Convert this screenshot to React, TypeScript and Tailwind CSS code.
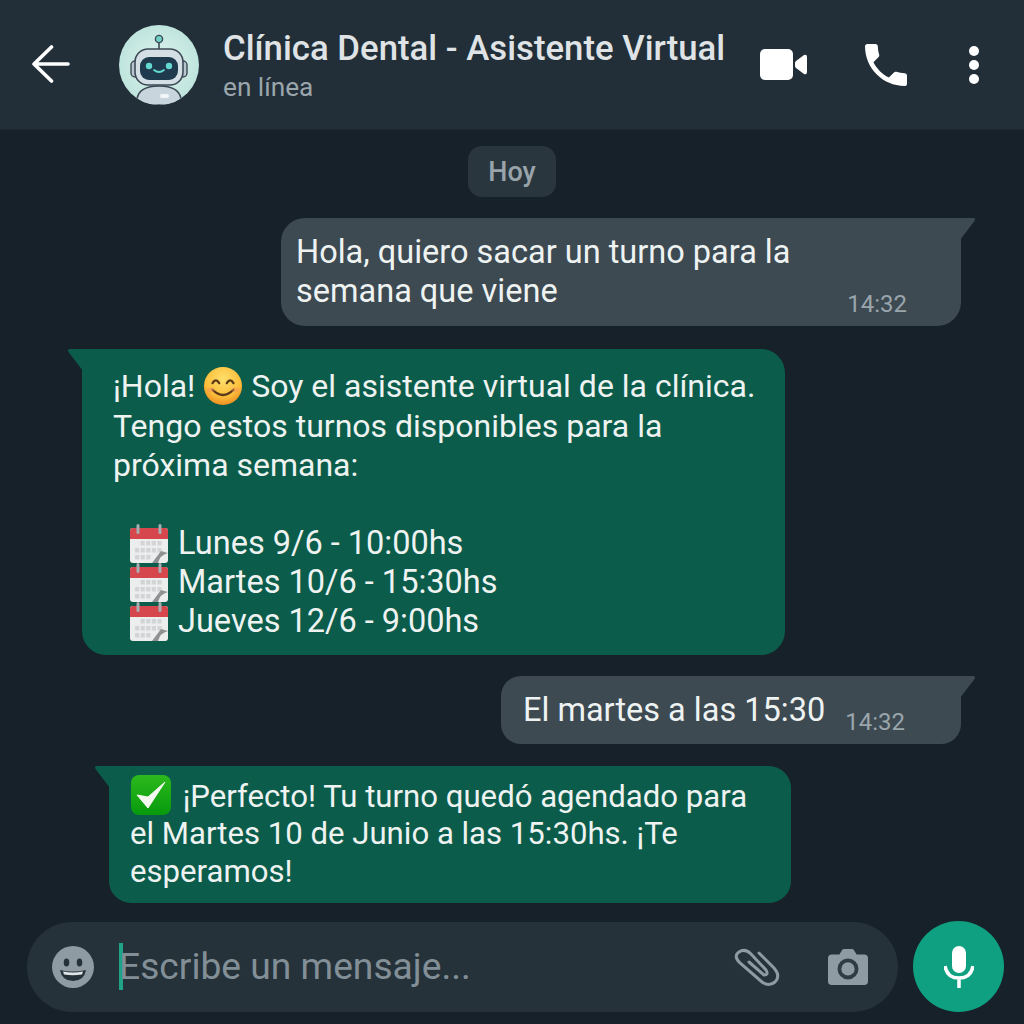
import React from "react";

function Smile() {
  return (
    <svg width="40" height="40" viewBox="0 0 42 42" className="inline-block align-[-9px]">
      <defs>
        <radialGradient id="sm" cx="50%" cy="32%" r="70%">
          <stop offset="0%" stopColor="#ffdf6a" />
          <stop offset="65%" stopColor="#fbbf3c" />
          <stop offset="100%" stopColor="#ee8a1f" />
        </radialGradient>
      </defs>
      <circle cx="21" cy="21" r="20" fill="url(#sm)" />
      <path d="M10 18q3.500-6 7 0M25 18q3.500-6 7 0" fill="none" stroke="#5b3a1a" strokeWidth="2.400" strokeLinecap="round" />
      <path d="M10 25q11 11 22 0" fill="none" stroke="#5b3a1a" strokeWidth="2.400" strokeLinecap="round" />
      <ellipse cx="8" cy="25" rx="4" ry="2.500" fill="#f58f5c" opacity=".45" />
      <ellipse cx="34" cy="25" rx="4" ry="2.500" fill="#f58f5c" opacity=".45" />
    </svg>
  );
}

function Cal() {
  const cells = [];
  for (let r = 0; r < 3; r++)
    for (let c = 0; c < 5; c++)
      if (!(r === 0 && c === 0) && !(r === 2 && c > 2))
        cells.push(<rect key={r + "-" + c} x={5 + c * 5.6} y={17 + r * 7} width="4.200" height="4.600" rx=".5" fill="#d2d4d6" />);
  return (
    <svg width="38" height="39" viewBox="0 0 38 39" className="shrink-0">
      <rect x="0" y="4" width="38" height="35" rx="3" fill="#eceeee" />
      <path d="M0 15V7q0-3 3-3h32q3 0 3 3v8z" fill="#d5474c" />
      {cells}
      <path d="M22 39L31 27l7 2q-8 2-10 10z" fill="#8f9193" />
      <rect x="6.500" y="0" width="3" height="10" rx="1.500" fill="#a8aeb2" />
      <rect x="28.500" y="0" width="3" height="10" rx="1.500" fill="#a8aeb2" />
    </svg>
  );
}

function Check() {
  return (
    <svg width="42" height="42" viewBox="0 0 42 42" className="inline-block align-[-9px] mr-[3px]">
      <defs>
        <linearGradient id="ck" x1="0" y1="0" x2="0" y2="1">
          <stop offset="0%" stopColor="#2cb91c" />
          <stop offset="100%" stopColor="#079a0d" />
        </linearGradient>
      </defs>
      <rect x="1" y="1" width="40" height="40" rx="8" fill="url(#ck)" />
      <path d="M7 21l11 13L35 8 18 23z" fill="#f4f8f0" stroke="#f4f8f0" strokeWidth="1" strokeLinejoin="round" />
    </svg>
  );
}

function Robot() {
  return (
    <svg width="80" height="80" viewBox="0 0 80 80" className="shrink-0">
      <defs>
        <clipPath id="rc"><circle cx="40" cy="40" r="40" /></clipPath>
        <radialGradient id="rb" cx="50%" cy="50%" r="60%">
          <stop offset="0%" stopColor="#e0f3ee" />
          <stop offset="100%" stopColor="#b8e2da" />
        </radialGradient>
      </defs>
      <g clipPath="url(#rc)">
        <rect width="80" height="80" fill="url(#rb)" />
        <path d="M18 80v-6q2-13 22-13t22 13v6z" fill="#c8d5dd" stroke="#3d4a56" strokeWidth="1.600" />
        <rect x="41" y="69" width="9" height="4" rx="2" fill="#f2f6f8" />
        <line x1="40" y1="16" x2="40" y2="24" stroke="#3d4a56" strokeWidth="1.600" />
        <circle cx="40" cy="14" r="3.600" fill="#6fd0c5" stroke="#3d4a56" strokeWidth="1.400" />
        <rect x="12" y="36" width="8" height="16" rx="4" fill="#b9c6cf" stroke="#3d4a56" strokeWidth="1.400" />
        <rect x="60" y="36" width="8" height="16" rx="4" fill="#b9c6cf" stroke="#3d4a56" strokeWidth="1.400" />
        <rect x="16" y="24" width="48" height="36" rx="13" fill="#d3dee5" stroke="#3d4a56" strokeWidth="1.600" />
        <rect x="21" y="32" width="38" height="23" rx="9" fill="#203a4d" />
        <circle cx="30" cy="41" r="3.200" fill="#63d8d0" />
        <circle cx="50" cy="41" r="3.200" fill="#63d8d0" />
        <path d="M35 45q5 4 10 0" fill="none" stroke="#63d8d0" strokeWidth="1.800" strokeLinecap="round" />
      </g>
    </svg>
  );
}

function Tail({ side, color }: { side: "left" | "right"; color: string }) {
  const d = side === "right" ? "M0 0H13Q16 0 14.500 3L0 22Z" : "M16 0H3Q0 0 1.500 3L16 22Z";
  return (
    <svg
      width="16"
      height="22"
      viewBox="0 0 16 22"
      className={side === "right" ? "absolute top-0 -right-[15px]" : "absolute top-0 -left-[15px]"}
    >
      <path d={d} fill={color} />
    </svg>
  );
}

const GRAY = "#3d4a52";
const GREEN = "#0b5c4a";

export default function App() {
  return (
    <div
      className="w-[1024px] h-[1024px] flex flex-col overflow-hidden bg-[#17212a] text-[#eef3f2]"
      style={{ fontFamily: "Roboto, 'Liberation Sans', sans-serif" }}
    >
      <header className="h-[130px] shrink-0 bg-[#232f38] border-b border-[#1d2730] flex items-center pl-[32px] pr-[45px]">
        <svg width="38" height="38" viewBox="0 0 38 38" className="shrink-0 -mt-[1px]">
          <path d="M2 19H36M19.500 2L2 19l17.500 17" fill="none" stroke="#fff" strokeWidth="3.600" strokeLinecap="round" strokeLinejoin="round" />
        </svg>
        <div className="ml-[49px]"><Robot /></div>
        <div className="ml-[24px] flex flex-col flex-1 min-w-0">
          <div className="text-[34.750px] leading-[40px] mt-[1px] font-medium text-[#dfe3e6] whitespace-nowrap">Clínica Dental - Asistente Virtual</div>
          <div className="text-[26.200px] leading-[30px] mt-[4px] text-[#9aa5ac]">en línea</div>
        </div>
        <svg width="48" height="32" viewBox="0 0 48 32" className="shrink-0">
          <rect x="0" y="0" width="33" height="31" rx="5" fill="#fff" />
          <path d="M36 12l8-6q3-1 3 2v15q0 3-3 2l-8-6q-1-1-1-2v-3q0-1 1-2z" fill="#fff" />
        </svg>
        <svg width="56" height="56" viewBox="0 0 24 24" className="shrink-0 ml-[50px]">
          <path d="M6.620 10.790c1.440 2.830 3.760 5.140 6.590 6.590l2.200-2.200c.27-.27.67-.36 1.020-.24 1.120.37 2.330.57 3.570.57.55 0 1 .45 1 1V20c0 .55-.45 1-1 1-9.390 0-17-7.610-17-17 0-.55.45-1 1-1h3.500c.55 0 1 .45 1 1 0 1.250.2 2.450.57 3.570.11.35.03.74-.25 1.020l-2.200 2.200z" fill="#fff" />
        </svg>
        <div className="shrink-0 ml-[55px] flex flex-col gap-[4px]">
          <span className="w-[10px] h-[10px] rounded-full bg-white" />
          <span className="w-[10px] h-[10px] rounded-full bg-white" />
          <span className="w-[10px] h-[10px] rounded-full bg-white" />
        </div>
      </header>

      <main className="flex-1 flex flex-col min-h-0">
        <div className="self-center mt-[16px] w-[88px] h-[51px] pt-[2px] rounded-[14px] bg-[#2a363e] flex items-center justify-center text-[27px] font-medium text-[#98a3aa]">
          Hoy
        </div>

        <div className="relative self-end mr-[63px] mt-[21px] w-[680px] h-[108px] rounded-b-[24px] rounded-tl-[24px] bg-[#3d4a52] pl-[15px] pt-[15px] text-[32.500px] leading-[39px]">
          <Tail side="right" color={GRAY} />
          <div>Hola, quiero sacar un turno para la</div>
          <div>semana que viene</div>
          <span className="absolute right-[54px] bottom-[8px] text-[24px] leading-[28px] text-[#9aa5ac]">14:32</span>
        </div>

        <div className="relative self-start ml-[82px] mt-[23px] w-[703px] h-[306px] rounded-b-[24px] rounded-tr-[24px] bg-[#0b5c4a] pl-[31px] pt-[18px] text-[32px] leading-[39.200px]">
          <Tail side="left" color={GREEN} />
          <div className="whitespace-nowrap -mt-[1px] h-[40.700px]">¡Hola! <Smile /> Soy el asistente virtual de la clínica.</div>
          <div>Tengo estos turnos disponibles para la</div>
          <div>próxima semana:</div>
          <div className="h-[38.700px]" />
          {["Lunes 9/6 - 10:00hs", "Martes 10/6 - 15:30hs", "Jueves 12/6 - 9:00hs"].map((t) => (
            <div key={t} className="flex items-center h-[39.200px] pl-[17px] gap-[10px]">
              <Cal />
              <span className="text-[32.500px]">{t}</span>
            </div>
          ))}
        </div>

        <div className="relative self-end mr-[63px] mt-[21px] w-[460px] h-[68px] rounded-b-[20px] rounded-tl-[20px] bg-[#3d4a52] pl-[22px] flex items-center text-[32.500px]">
          <Tail side="right" color={GRAY} />
          <span>El martes a las 15:30</span>
          <span className="absolute right-[56px] bottom-[8px] text-[24px] leading-[28px] text-[#9aa5ac]">14:32</span>
        </div>

        <div className="relative self-start ml-[109px] mt-[22px] w-[682px] h-[137px] rounded-b-[22px] rounded-tr-[22px] bg-[#0b5c4a] pl-[21px] pt-[11px] text-[31.150px] leading-[37.500px]">
          <Tail side="left" color={GREEN} />
          <div className="whitespace-nowrap -mt-[3px] h-[40.500px]"><Check /> ¡Perfecto! Tu turno quedó agendado para</div>
          <div>el Martes 10 de Junio a las 15:30hs. ¡Te</div>
          <div className="pt-[1px]">esperamos!</div>
        </div>

        <div className="mt-[18px] flex items-center pl-[27px] pr-[20px] gap-[15px]">
          <div className="w-[871px] h-[90px] rounded-full bg-[#26323a] flex items-center pl-[25px] pr-[30px]">
            <svg width="42" height="42" viewBox="0 0 42 42" className="shrink-0">
              <circle cx="21" cy="21" r="21" fill="#8f9ba2" />
              <ellipse cx="14.500" cy="16.500" rx="2.800" ry="4" fill="#26323a" />
              <ellipse cx="27.500" cy="16.500" rx="2.800" ry="4" fill="#26323a" />
              <path d="M8 24q13 3 26 0-2 11-13 11T8 24z" fill="#26323a" />
              <path d="M11 25.500q10 2 20 0l-1 3q-9 1.500-18 0z" fill="#dfe4e6" />
            </svg>
            <span className="ml-[25px] w-[4px] h-[47px] bg-[#1fa487] shrink-0" />
            <span className="flex-1 -ml-[4px] text-[37.200px] leading-[47px] text-[#828f97]">Escribe un mensaje...</span>
            <svg width="60" height="50" viewBox="0 0 60 50" className="shrink-0 mr-[43px]">
              <path d="M34 11L49 26Q56 34 50 40Q44 45 37 40L15 21Q8 14 14 10Q20 6 26 12L41 28Q44 33 39 33L24 20" fill="none" stroke="#8f9ba2" strokeWidth="3" strokeLinecap="round" />
            </svg>
            <svg width="40" height="38" viewBox="0 0 42 38" className="shrink-0">
              <path d="M4 6h8l3-5q.5-1 2-1h8q1.500 0 2 1l3 5h8q4 0 4 4v24q0 4-4 4H4q-4 0-4-4V10q0-4 4-4z" fill="#8f9ba2" />
              <circle cx="21" cy="21" r="9" fill="#8f9ba2" stroke="#2f3c44" strokeWidth="4" />
            </svg>
          </div>
          <div className="w-[91px] h-[91px] rounded-full bg-[#0fa081] flex items-center justify-center shrink-0">
            <svg width="30" height="42" viewBox="0 0 30 42">
              <rect x="8" y="0" width="14" height="27" rx="7" fill="#fff" />
              <path d="M1 20q2 12 14 12t14-12M15 32v10" fill="none" stroke="#fff" strokeWidth="3.500" />
            </svg>
          </div>
        </div>
      </main>
    </div>
  );
}
